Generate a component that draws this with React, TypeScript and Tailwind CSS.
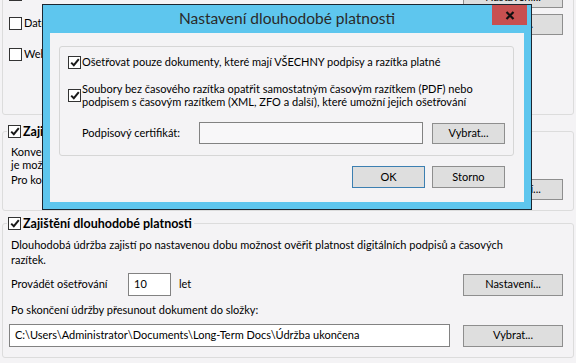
import React from 'react';

function Check({ checked = false }: { checked?: boolean }) {
  return (
    <span className="w-[13px] h-[13px] shrink-0 border border-[#333333] bg-white flex items-center justify-center">
      {checked && (
        <svg width="10" height="9" viewBox="0 0 10 9">
          <path d="M1.2 4.6 L3.8 7.2 L8.8 1.2" stroke="#1a1a1a" strokeWidth="2" fill="none" />
        </svg>
      )}
    </span>
  );
}

function Btn({ children, className = '', focused = false }: { children: React.ReactNode; className?: string; focused?: boolean }) {
  return (
    <div
      className={`flex items-center justify-center bg-[#dedede] border ${
        focused ? 'border-[#3c7fb1]' : 'border-[#8e8e8e]'
      } text-[11px] text-black ${className}`}
    >
      {children}
    </div>
  );
}

function Group({ title, children, className = '' }: { title: string; children: React.ReactNode; className?: string }) {
  return (
    <fieldset className={`border border-[#dcdcdc] rounded-[3px] ${className}`}>
      <legend className="-ml-[4px] pr-[2px] pl-px">
        <span className="flex items-center gap-[2px] h-[13px]">
          <Check checked />
          <span className="font-bold text-[12.5px] leading-[13px] whitespace-nowrap">{title}</span>
        </span>
      </legend>
      {children}
    </fieldset>
  );
}

export default function App() {
  return (
    <div className="relative w-[576px] h-[363px] overflow-hidden bg-[#f4f3f5] text-[11px] text-black font-['Lato',sans-serif]">
      <div className="flex flex-col px-[2px]">
        {/* horni skupina, vetsinou pod dialogem */}
        <div className="-mt-[24px] h-[139px] border border-[#dcdcdc] rounded-[3px] flex justify-between pl-[6px] pr-[10px]">
          <div className="flex flex-col pt-[11px] gap-[16px]">
            <div className="flex items-center gap-[2px] h-[13px]">
              <Check />
              <span>Podepsat dokument</span>
            </div>
            <div className="flex items-center gap-[2px] h-[13px]">
              <Check />
              <span>Datová schránka</span>
            </div>
            <div className="flex items-center gap-[2px] h-[13px] mt-[2px]">
              <Check />
              <span>Webová služba</span>
            </div>
          </div>
          <div className="flex flex-col pt-[9px] gap-[6px]">
            <Btn className="w-[100px] h-[22px]">Nastavení...</Btn>
            <Btn className="w-[100px] h-[21px]">Vybrat...</Btn>
          </div>
        </div>

        <Group title="Zajištění konverze" className="mt-[10px] pl-[8px] pr-[10px] pt-[7px] pb-[10px]">
          <div className="leading-[13px]">
            <div className="whitespace-nowrap">Konverze dokumentů do formátu PDF/A, který je určen pro dlouhodobou archivaci,</div>
            <div className="whitespace-nowrap">je možná jen pro dokumenty bez podpisu.</div>
          </div>
          <div className="flex justify-between items-start mt-[2px]">
            <div className="leading-[13px] whitespace-nowrap">Pro konverzi ostatních dokumentů nastavte další volby.</div>
            <Btn className="w-[100px] h-[21px] mt-[6px]">Nastavení...</Btn>
          </div>
        </Group>

        <Group title="Zajištění dlouhodobé platnosti" className="mt-[6px] pl-[8px] pr-[10px] pt-[7px] pb-[10px]">
          <div className="leading-[15px]">
            Dlouhodobá údržba zajistí po nastavenou dobu možnost ověřit platnost digitálních podpisů a časových
            <br />
            razítek.
          </div>
          <div className="flex items-center justify-between mt-[6px]">
            <div className="flex items-center">
              <span className="w-[117px]">Provádět ošetřování</span>
              <div className="w-[43px] h-[23px] border border-[#828282] bg-white flex items-center pl-[5px]">10</div>
              <span className="ml-[8px]">let</span>
            </div>
            <Btn className="w-[100px] h-[22px]">Nastavení...</Btn>
          </div>
          <div className="leading-[15px] mt-[6px]">Po skončení údržby přesunout dokument do složky:</div>
          <div className="flex items-center justify-between mt-[7px] -ml-[2px]">
            <div className="w-[441px] h-[23px] border border-[#828282] bg-white flex items-center pl-[5px] whitespace-nowrap overflow-hidden">
              C:\Users\Administrator\Documents\Long-Term Docs\Údržba ukončena
            </div>
            <Btn className="w-[100px] h-[22px]">Vybrat...</Btn>
          </div>
        </Group>
      </div>

      {/* dialog */}
      <div className="absolute left-[42px] top-[4px] w-[490px] h-[206px] border border-[#1b2631] bg-[#5ec6ee] flex flex-col">
        <div className="relative h-[28px] shrink-0 flex items-center justify-center text-[15.5px] text-[#2a2a2a]">
          Nastavení dlouhodobé platnosti
          <div className="absolute right-[4px] top-0 w-[35px] h-[20px] bg-[#c75050] flex items-center justify-center">
            <svg width="10" height="9" viewBox="0 0 10 9">
              <path d="M1.5 1 L8.5 8 M8.5 1 L1.5 8" stroke="#111" strokeWidth="2.2" />
            </svg>
          </div>
        </div>
        <div className="flex-1 mx-[7px] mb-[7px] bg-[#f4f3f5] pt-[13px] pl-[9px] pr-[10px]">
          <div className="h-[110px] border border-[#d6d6d6] rounded-[3px] pl-[8px] pt-[9px]">
            <div className="flex items-center gap-px h-[13px]">
              <Check checked />
              <span className="whitespace-nowrap">Ošetřovat pouze dokumenty, které mají VŠECHNY podpisy a razítka platné</span>
            </div>
            <div className="flex items-center gap-px mt-[13px]">
              <Check checked />
              <span className="leading-[13px] whitespace-nowrap">
                Soubory bez časového razítka opatřit samostatným časovým razítkem (PDF) nebo
                <br />
                podpisem s časovým razítkem (XML, ZFO a další), které umožní jejich ošetřování
              </span>
            </div>
            <div className="flex items-center mt-[14px] pl-[14px]">
              <span className="w-[117px]">Podpisový certifikát:</span>
              <div className="w-[224px] h-[22px] border border-[#828282] bg-[#f8f7f9]" />
              <Btn className="w-[73px] h-[21px] ml-[9px]">Vybrat...</Btn>
            </div>
          </div>
          <div className="flex justify-end gap-[7px] mt-[10px] pr-[9px]">
            <Btn focused className="w-[73px] h-[22px]">OK</Btn>
            <Btn className="w-[73px] h-[22px]">Storno</Btn>
          </div>
        </div>
      </div>
    </div>
  );
}
